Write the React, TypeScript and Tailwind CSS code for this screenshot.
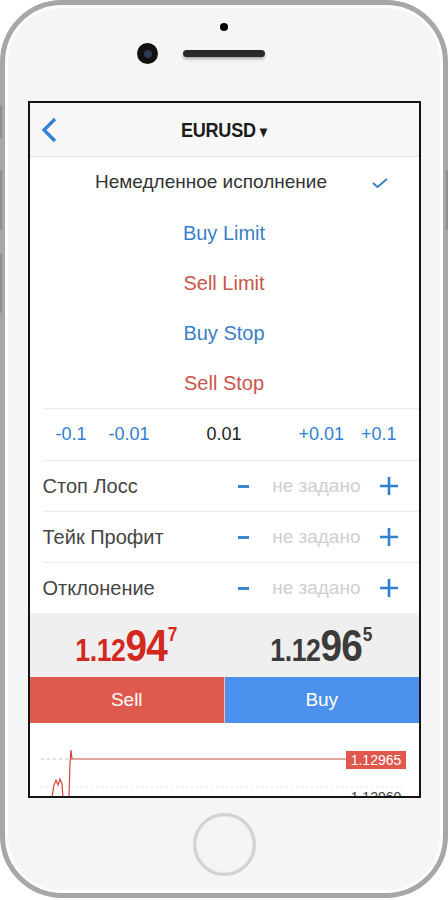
import React from 'react';

const sans = { fontFamily: '"Liberation Sans", Arial, sans-serif' };

const orderTypes = [
  { label: 'Buy Limit', color: 'text-[#3a80c6]' },
  { label: 'Sell Limit', color: 'text-[#c9564c]' },
  { label: 'Buy Stop', color: 'text-[#3a80c6]' },
  { label: 'Sell Stop', color: 'text-[#c9564c]' },
];

const levels = ['Стоп Лосс', 'Тейк Профит', 'Отклонение'];

const Plus = () => (
  <svg width="18" height="18" viewBox="0 0 18 18" className="shrink-0">
    <path d="M9 0v18M0 9h18" stroke="#2f80d3" strokeWidth="2.6" />
  </svg>
);

const Minus = () => (
  <div className="w-[24px] flex justify-center">
    <div className="w-[11px] h-[3px] bg-[#3a86d4]" />
  </div>
);

// condensed look: the narrow family is not installed, so squeeze it
const Price = ({ head, big, tail, color }: { head: string; big: string; tail: string; color: string }) => (
  <div className="flex justify-center">
    <div className={`flex items-start font-bold scale-x-[0.86] ${color}`}>
      <span className="text-[31px] leading-none mt-[12px] tracking-[-0.5px]">{head}</span>
      <span className="text-[45px] leading-none tracking-[-1px]">{big}</span>
      <span className="text-[20px] leading-none mt-[1px] ml-[1px]">{tail}</span>
    </div>
  </div>
);

export default function App() {
  return (
    <div className="w-[448px] bg-white" style={sans}>
      <div className="relative w-[448px] h-[898px] rounded-[62px] border-[5px] border-[#a7a7a7] bg-[#f4f5f4] shadow-[inset_0_0_0_3px_#fdfdfd] flex flex-col items-center">
        {/* side buttons */}
        <div className="absolute -left-[5px] top-[100px] w-[2px] h-[34px] bg-[#8e8e8e] rounded-sm" />
        <div className="absolute -left-[5px] top-[165px] w-[2px] h-[60px] bg-[#8e8e8e] rounded-sm" />
        <div className="absolute -left-[5px] top-[248px] w-[2px] h-[60px] bg-[#8e8e8e] rounded-sm" />
        <div className="absolute -right-[5px] top-[165px] w-[2px] h-[60px] bg-[#8e8e8e] rounded-sm" />

        {/* top: sensor, camera, speaker */}
        <div className="h-[96px] w-full flex flex-col items-center">
          <div className="mt-[18px] w-[8px] h-[8px] rounded-full bg-black" />
          <div className="mt-[12px] flex items-center">
            <div className="w-[21px] h-[21px] rounded-full bg-[#111] flex items-center justify-center">
              <div className="w-[8px] h-[8px] rounded-full bg-[#2c3a5a]" />
            </div>
            <div className="ml-[25px] w-[82px] h-[7px] rounded-full bg-[#2a2a2a] shadow-[0_2px_3px_rgba(0,0,0,0.3)]" />
            <div className="ml-[25px] w-[21px]" />
          </div>
        </div>

        {/* screen */}
        <div className="w-[393px] h-[697px] border-2 border-[#141414] bg-white overflow-hidden flex flex-col">
          <div className="h-[54px] shrink-0 bg-[#f7f7f7] border-b border-[#dedede] grid grid-cols-[60px_1fr_60px] items-center">
            <div className="pl-[11px]">
              <svg width="16" height="26" viewBox="0 0 16 26">
                <path d="M14 2 L3 13 L14 24" fill="none" stroke="#2f7fd6" strokeWidth="3.2" />
              </svg>
            </div>
            <div className="flex justify-center">
              <div className="text-[21px] font-bold text-[#1b1b1b] tracking-[-0.3px] scale-x-[0.86]">
                EURUSD <span className="text-[16px]">▾</span>
              </div>
            </div>
            <div />
          </div>

          <div className="relative h-[51px] shrink-0 flex items-center justify-center pr-[26px]">
            <span className="text-[19px] text-[#333]">Немедленное исполнение</span>
            <svg className="absolute right-[31px] top-[21px]" width="16" height="10" viewBox="0 0 16 10">
              <path d="M1 5 L5.5 9 L15 1" fill="none" stroke="#3a80c6" strokeWidth="2" />
            </svg>
          </div>
          {orderTypes.map((o) => (
            <div key={o.label} className={`h-[50px] shrink-0 flex items-center justify-center text-[20px] ${o.color}`}>
              {o.label}
            </div>
          ))}

          <div className="ml-[13px] flex flex-col shrink-0">
            <div className="h-[52px] border-t border-[#ececec] flex items-center pl-[13px] pr-[22px] text-[18px] text-[#2f80d3]">
              <span className="w-[32px]">-0.1</span>
              <span className="ml-[21px]">-0.01</span>
              <span className="flex-1 text-center text-[#222]">0.01</span>
              <span>+0.01</span>
              <span className="ml-[17px]">+0.1</span>
            </div>
            {levels.map((l) => (
              <div key={l} className="h-[51px] border-t border-[#ececec] flex items-center pr-[21px]">
                <span className="flex-1 text-[20px] text-[#454545]">{l}</span>
                <Minus />
                <span className="ml-[17px] mr-[19px] text-[19px] text-[#cfcfcf]">не задано</span>
                <Plus />
              </div>
            ))}
          </div>

          <div className="h-[64px] shrink-0 bg-[#efefef] grid grid-cols-2 items-center">
            <Price head="1.12" big="94" tail="7" color="text-[#d3281f]" />
            <Price head="1.12" big="96" tail="5" color="text-[#3b3b3b]" />
          </div>

          <div className="h-[46px] shrink-0 grid grid-cols-2 text-white text-[19px]">
            <div className="bg-[#df5a4e] flex items-center justify-center">Sell</div>
            <div className="bg-[#4b90ec] flex items-center justify-center border-l border-[#f0c0b8]">Buy</div>
          </div>

          <div className="flex-1 relative">
            <svg width="389" height="74" viewBox="0 0 389 74" className="block">
              <line x1="11" y1="36" x2="41" y2="36" stroke="#b9c3d4" strokeWidth="1" strokeDasharray="3 3" />
              <line x1="11" y1="64" x2="376" y2="64" stroke="#e4e4e4" strokeWidth="1" strokeDasharray="2 3" />
              <line x1="41" y1="36" x2="316" y2="36" stroke="#d9877e" strokeWidth="1.5" />
              <path d="M39 74 L40 40 L41 27 L42 36" fill="none" stroke="#d2453a" strokeWidth="1.2" />
              <path d="M22 74 L24 62 L26 57 L28 62 L30 56 L32 61 L33 74" fill="none" stroke="#d2453a" strokeWidth="1.2" />
              <rect x="316" y="28" width="60" height="18" fill="#e0574b" />
              <text x="346" y="42" textAnchor="middle" fontSize="14" fill="#fff" fontFamily="Liberation Sans, Arial, sans-serif">1.12965</text>
              <text x="346" y="79" textAnchor="middle" fontSize="14" fill="#444" fontFamily="Liberation Sans, Arial, sans-serif">1.12960</text>
            </svg>
          </div>
        </div>

        {/* home button */}
        <div className="mt-[15px] w-[63px] h-[63px] rounded-full border-[3px] border-[#d2d2d2] bg-[#f4f5f4] shadow-[inset_0_0_0_1px_#e8e8e8]" />
      </div>
    </div>
  );
}
